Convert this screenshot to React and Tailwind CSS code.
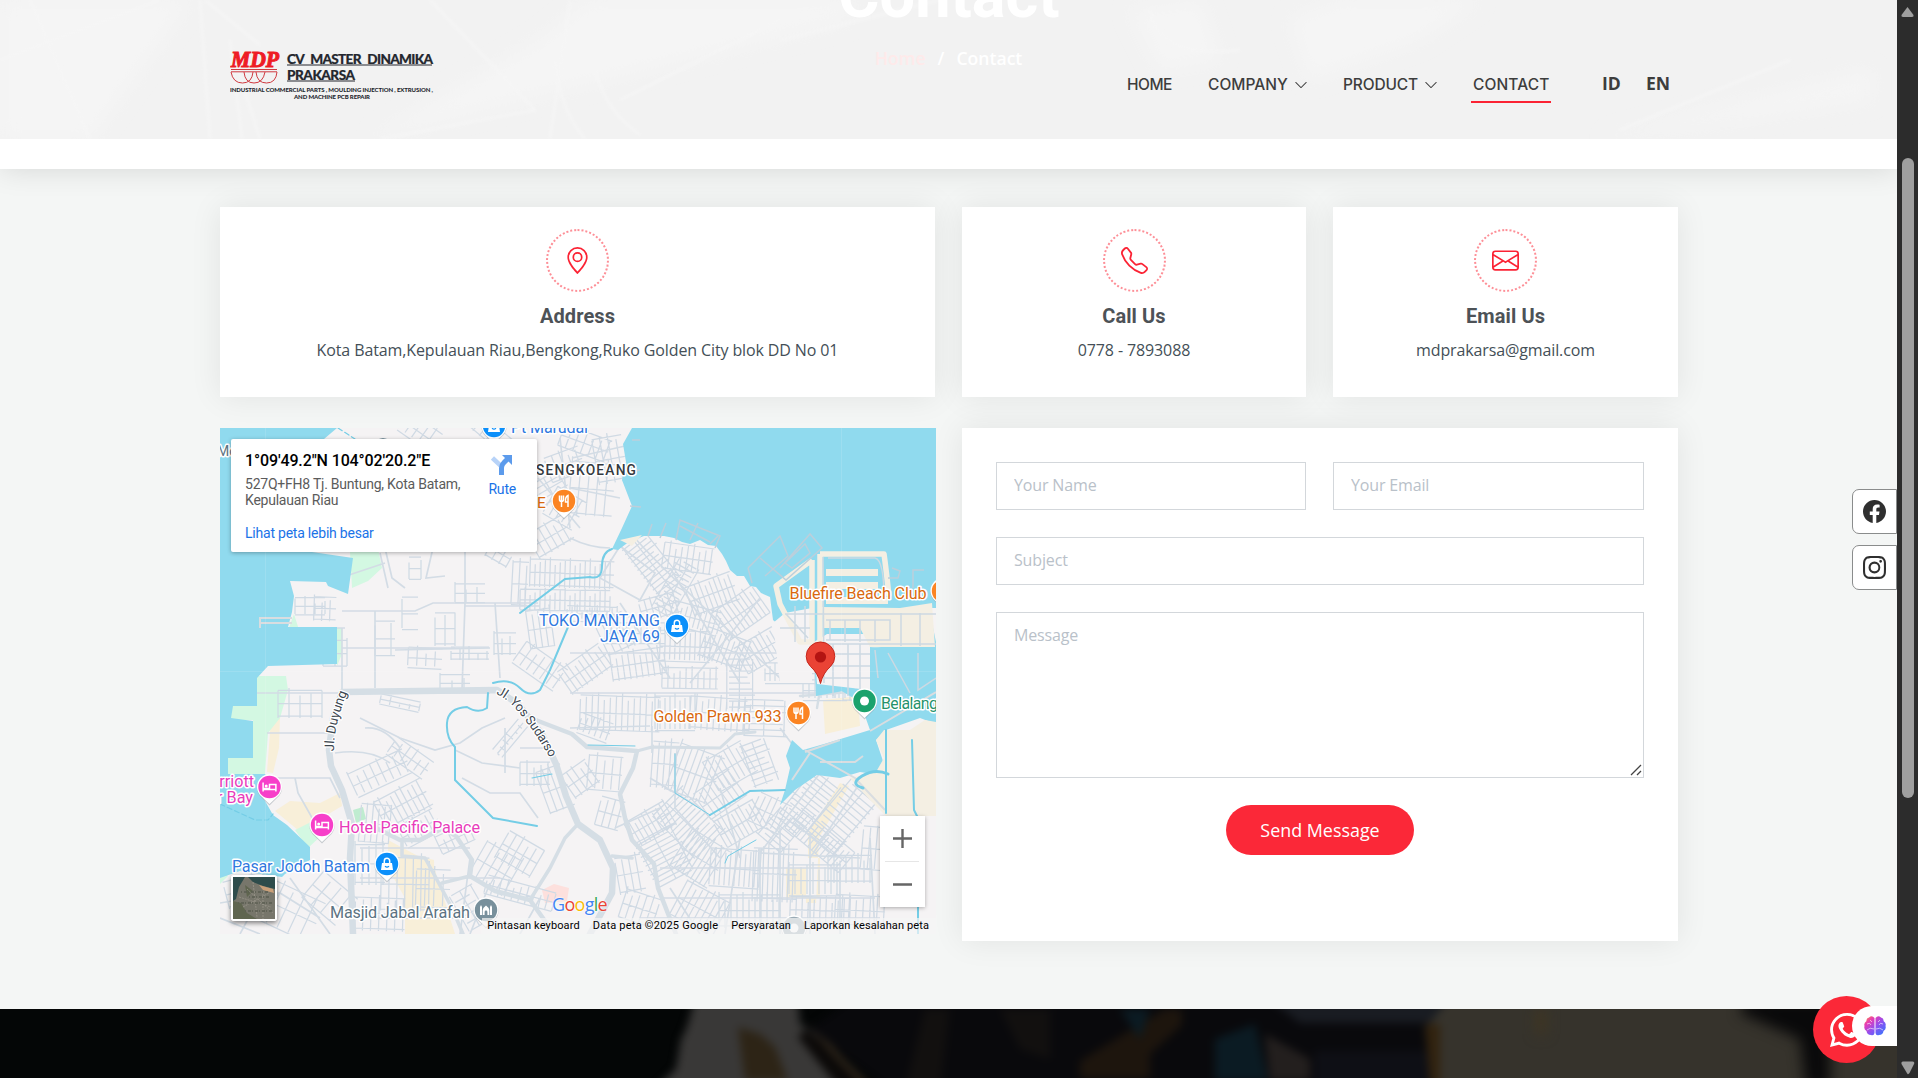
import React from "react";
import {
  BsGeoAlt,
  BsTelephone,
  BsEnvelope,
  BsFacebook,
  BsInstagram,
  BsWhatsapp,
  BsChevronDown,
} from "react-icons/bs";

const rot = (cx, cy, a, x, y) => {
  const r = (a * Math.PI) / 180;
  return [
    (cx + x * Math.cos(r) - y * Math.sin(r)).toFixed(1),
    (cy + x * Math.sin(r) + y * Math.cos(r)).toFixed(1),
  ].join(" ");
};

// Street blocks: [centre x, centre y, width, height, angle, spacing]
const BLOCKS = [
  [352, 145, 84, 30, 2, 5], [345, 172, 90, 24, 1, 5], [372, 186, 50, 18, 2, 5],
  [330, 108, 40, 30, -30, 7], [372, 60, 44, 60, 5, 9], [345, 80, 34, 36, 30, 7],
  [390, 30, 30, 50, -10, 8], [365, 15, 50, 26, 20, 8], [200, 4, 40, 26, 35, 8],
  [270, 4, 60, 20, 40, 8], [345, 36, 36, 30, -20, 8], [330, 60, 24, 34, 60, 6],
  [432, 135, 66, 32, 52, 5], [468, 130, 50, 30, 8, 6], [455, 160, 56, 26, -60, 5],
  [492, 165, 48, 34, -20, 5], [520, 185, 50, 38, -35, 5], [475, 190, 50, 28, 15, 5],
  [440, 178, 40, 24, -15, 6], [415, 205, 60, 24, 0, 6], [465, 218, 50, 36, 2, 5],
  [505, 220, 46, 34, 20, 5], [540, 222, 44, 34, -30, 5], [570, 245, 50, 24, 0, 5],
  [418, 235, 54, 30, -8, 6], [470, 250, 56, 24, 1, 6], [520, 256, 50, 30, 90, 6],
  [395, 205, 30, 40, -25, 7], [320, 200, 24, 44, -8, 6], [320, 238, 50, 30, 35, 8],
  [365, 240, 50, 30, -35, 6], [400, 285, 80, 40, 2, 6], [455, 285, 40, 40, 0, 5],
  [500, 285, 60, 36, 4, 6], [545, 290, 36, 46, 92, 6], [375, 300, 32, 24, 20, 6],
  [620, 222, 26, 70, 0, 8], [640, 250, 34, 50, 0, 7], [605, 262, 44, 24, 0, 6],
  [445, 335, 26, 50, 4, 6], [475, 345, 46, 56, 20, 6], [510, 338, 44, 40, -30, 6],
  [540, 335, 44, 28, 70, 6], [500, 366, 44, 36, -35, 6], [468, 395, 60, 46, 45, 5],
  [430, 395, 46, 30, -30, 5], [520, 395, 46, 34, -30, 5], [550, 385, 34, 36, 25, 6],
  [445, 428, 50, 44, 62, 5], [480, 430, 44, 50, 32, 5], [515, 440, 50, 44, 4, 5],
  [555, 445, 44, 58, 2, 5], [560, 402, 34, 34, -50, 5], [590, 372, 58, 38, -52, 5],
  [622, 388, 70, 40, -50, 6], [600, 412, 70, 30, 40, 5], [595, 452, 52, 36, 0, 6],
  [630, 440, 44, 30, 0, 6], [600, 482, 60, 30, 2, 6], [655, 420, 26, 50, 5, 7],
  [530, 482, 62, 36, 0, 6], [480, 480, 48, 44, 28, 6], [640, 482, 50, 34, 3, 7],
  [410, 445, 26, 40, -10, 7], [420, 480, 36, 34, 18, 7], [385, 345, 34, 40, 5, 8],
  [360, 350, 30, 30, -35, 7], [390, 385, 24, 34, 15, 7],
  [160, 345, 60, 30, -25, 8], [183, 375, 52, 34, -28, 6], [155, 395, 30, 44, 5, 6],
  [200, 400, 40, 28, -28, 6], [150, 435, 30, 44, 0, 7], [185, 455, 48, 60, 1, 8],
  [213, 460, 34, 44, 2, 9], [160, 485, 50, 36, 2, 8], [235, 410, 36, 22, -25, 7],
  [275, 440, 40, 46, 30, 8], [300, 425, 40, 34, 30, 8], [300, 465, 70, 22, 15, 7],
  [250, 480, 40, 28, 60, 8], [315, 345, 30, 26, 0, 7], [335, 360, 26, 50, -20, 7],
  [190, 330, 44, 24, 35, 8], [105, 180, 22, 26, 2, 8], [90, 178, 30, 20, 0, 10],
  [190, 185, 16, 38, 0, 18], [225, 200, 20, 36, 0, 10], [250, 165, 30, 22, 0, 11],
  [205, 230, 34, 24, 3, 9], [250, 225, 38, 14, 0, 9], [165, 210, 20, 40, 0, 16],
  [235, 255, 30, 20, 0, 12], [80, 275, 44, 30, 0, 11], [115, 225, 24, 30, 0, 12],
  [290, 310, 40, 14, -50, 7], [285, 215, 22, 24, 0, 8], [180, 275, 40, 12, 12, 10],
  [65, 480, 70, 50, 25, 12], [30, 460, 50, 30, -15, 10], [110, 470, 44, 40, 40, 12],
  [300, 155, 16, 50, 3, 7], [280, 125, 24, 20, 30, 8], [195, 140, 12, 26, 0, 12],
];

const BLOCK_PATH = BLOCKS.map(([cx, cy, w, h, a, s], n) => {
  let d = "";
  let i = 0;
  for (let x = -w / 2; x <= w / 2; x += s) {
    const cut = ((i * 7 + n * 5) % 4) * 2.5;
    d += `M${rot(cx, cy, a, x, -h / 2 + cut)}L${rot(cx, cy, a, x, h / 2 - ((i * 3 + n) % 3) * 2)}`;
    i++;
  }
  [-0.42, 0.02, 0.44].forEach((f) => {
    d += `M${rot(cx, cy, a, -w / 2, h * f)}L${rot(cx, cy, a, w / 2, h * f)}`;
  });
  return d;
}).join("");

const Pin = ({ x, y, color, kind }) => (
  <g transform={`translate(${x} ${y})`}>
    <path d="M0 17.5L-8 9.5A12.6 12.6 0 1 1 8 9.5Z" fill="#8b96a0" opacity=".45" transform="translate(0 1)" />
    <path d="M0 17L-8 9.5A12.6 12.6 0 1 1 8 9.5Z" fill="#fff" />
    <circle r="11.2" fill={color} />
    {kind === "food" && (
      <path d="M-4.5-5.5v4q0 2 2 2v5.5M-2.5-5.5V0M-.5-5.5v4q0 2-2 2M4 6V-5.5Q1-4 1.5 1H4" fill="none" stroke="#fff" strokeWidth="1.5" />
    )}
    {kind === "bag" && (
      <g>
        <path d="M-5-1H5L6 6H-6Z" fill="#fff" />
        <path d="M-2.7 0V-3a2.7 2.7 0 0 1 5.4 0V0" fill="none" stroke="#fff" strokeWidth="1.5" />
        <path d="M-2 2.2q2 2 4 0" fill="none" stroke={color} strokeWidth="1.2" />
      </g>
    )}
    {kind === "bed" && (
      <g>
        <path d="M-6.4-4.5V4.5M-6.4 2.5H6.4V4.5M6.4 2V-2.5H0V1.5H-6" fill="none" stroke="#fff" strokeWidth="1.5" />
        <circle cx="-3.3" cy="-1" r="1.5" fill="#fff" />
      </g>
    )}
    {kind === "dot" && <circle r="4.5" fill="#fff" />}
    {kind === "mosque" && (
      <path d="M-6 5V-3l1-2 1 2V5ZM4 5V-3l1-2 1 2V5ZM-3.3 5V0q0-2 3.3-4.5Q3.3-2 3.3 0V5H1.4V2a1.4 1.4 0 0 0-2.8 0V5Z" fill="#fff" />
    )}
  </g>
);

const Label = ({ x, y, color, children, size = 16.2, len, anchor = "start", ...rest }) => (
  <text
    x={x}
    y={y}
    fill={color}
    fontSize={size}
    textLength={len}
    textAnchor={anchor}
    stroke="#fff"
    strokeWidth="3"
    strokeLinejoin="round"
    paintOrder="stroke"
    {...rest}
  >
    {children}
  </text>
);

function MapArt() {
  return (
    <svg viewBox="0 0 716 506" className="block h-[506px] w-[716px] font-['Roboto',sans-serif]">
      <rect width="716" height="506" fill="#f5f3f4" />
      <g fill="#f8efd9">
        <path d="M55 383L70 373 100 375 120 365 122 378 90 397 78 402Z" />
        <path d="M168 412L198 428 214 432 216 506H185V470L168 440Z" />
        <path d="M198 432L215 442 235 506H190Z" />
        <path d="M603 272L638 268 640 298 605 306ZM620 355L629 358 599 410 596 475H586V440H566V470H600V430H588V405Z" />
        <path d="M51 291L60 289 59 320 53 345 47 344Z" />
      </g>
      <g fill="#d3f8e2">
        <path d="M92 121H158L162 140 148 153 132 160 130 124Z" />
        <path d="M37 248H66L68 262 60 290 48 305 45 346H5V325H33V292H8V276H37Z" />
        <path d="M67 205L74 186 80 205ZM117 200H122V226L117 238ZM75 402L95 392 103 406 88 420ZM0 440L8 448 0 456Z" />
      </g>
      <path d="M133 382L143 379 146 391 136 395Z" fill="#bfecd0" />
      <path d="M322 462l12-6 15 4-2 13-22 2z" fill="#fde0dd" />

      {/* Streets */}
      <path d={BLOCK_PATH} fill="none" stroke="#d0dae4" strokeWidth="1.25" />
      <g fill="none" stroke="#d3dce5" strokeWidth="1.7">
        <path d="M122 200V262M122 183H195L213 175H318M155 183V260M120 150L165 135M165 120L172 150 185 160M245 120V175L242 262M245 178H320M275 175L280 250M37 265H270M47 305H110M122 220H235M0 200H125M175 222L270 220M160 125L168 160M213 120L206 150 225 148" />
        <path d="M115 325Q150 320 170 335M140 290L180 310 215 322 240 315 262 300 285 290M235 322L262 335 300 340M285 300L285 345M145 300Q165 298 180 320M242 350L270 365 300 365 318 390M300 320H325M55 350H110L120 370M75 350L78 365 95 395" />
        <path d="M400 118L380 150 420 172 435 145 400 118M350 110Q370 120 390 120M350 60L400 70M352 30L405 18M340 10L350 100M318 50L360 100M415 110Q440 140 560 250M400 175L450 250M450 140L520 255M540 170L470 255M350 225L600 225M350 265H600M350 300L430 298M432 298V325M560 300L575 320M615 230V270M600 345L540 425 640 430M640 355L590 430M575 395L610 425" />
        <path d="M540 420V506M560 400V506M520 410L505 506M590 405V506M620 440V506M650 410L655 506M500 360L520 430M430 350L480 380M455 325V380L500 430M440 440H640M440 470H655M420 490H660M450 460L480 506M395 400L440 380" />
        <path d="M0 475L60 465 100 490M20 506L50 450M70 450L110 506M140 420H250M140 450H280M150 490H250M250 430L240 506M270 455L250 506M0 490L40 506M300 506L320 470" />
      </g>

      {/* Main roads */}
      <g fill="none" stroke="#d5dee5" strokeLinecap="round" strokeLinejoin="round">
        <path d="M122 264L277 262 298 276 322 306 336 336 346 368 358 396 380 412 393 440 392 465 370 506" strokeWidth="6.5" />
        <path d="M122 264L113 290 109 322 111 338 122 362 132 396 130 430 133 506" strokeWidth="6.5" />
        <path d="M313 291L352 306 367 319 417 323 413 340 400 366 405 390 412 412 434 436 438 460 456 506" strokeWidth="4.5" />
        <path d="M417 323L432 319 500 320 515 306 535 304" strokeWidth="3" />
        <path d="M150 397L180 412 200 412 222 400 236 408 252 432 250 448 275 463 310 472 330 500" strokeWidth="4.5" />
        <path d="M182 414V428L205 430 216 450 232 480 243 506M222 455L250 448M358 396L345 410 330 440 310 472M392 428L412 430" strokeWidth="3.6" />
        <path d="M597 132L601 256 597 280 M640 240L655 262 580 268" strokeWidth="2.4" />
      </g>

      {/* Water */}
      <g fill="#90daee">
        <path d="M0 0H117L104 11V124H92L133 130 128 166 108 158 106 154 70 153 74 168 72 184 68 199H117V236L48 238 37 250V278H13L11 290 33 293V330H8V346H45L52 356 40 364 53 387 67 397 90 419V432L65 446 62 449 20 443 0 450Z" />
        <path d="M412 0H716V180H709L716 214 650 220V258L596 268 594 220 580 216 553 192 550 169 541 165 536 159 530 158 524 148 517 148 510 142 506 133 502 126 496 118 488 117 480 112 470 116 462 114 454 110 444 108 424 108 410 113 398 122 392 121 402 100 412 78 402 52 406 34 403 16Z" />
        <path d="M620 262L650 259V220L716 214V296L700 290 666 302 656 312 662 330 667 348 640 344 620 350 597 347 575 362 560 377 565 362 570 340 566 328 572 312 583 322 604 316 650 302 640 274Z" />
      </g>
      <path d="M597 256L594 214 607 206H650V262Z" fill="#f5f3f4" />
      <path d="M565 185L592 180V255H560L553 195Z" fill="#f5f3f4" />
      <g fill="#f4efe3">
        <path d="M602 179L680 180 712 175 715 219H650L640 200H604Z" />
        <path d="M664 302L690 302 705 292 716 294V388H666L650 372 630 350 656 344 664 330 656 312Z" />
        <path d="M606 141H658V148H606ZM606 154H658V161H606ZM606 169H668V176H606Z" />
        <path d="M400 112L422 107 412 118Z" />
      </g>
      <g fill="none" stroke="#f4efe3" strokeWidth="5.5" strokeLinejoin="round">
        <path d="M600 126H664Q666 140 669 168M600 126V215" />
        <path d="M592 132L556 158 560 176 580 214H592V132" />
      </g>
      <path d="M561 162L588 143V180L566 178Z" fill="#90daee" />
      <path d="M603 129L604 255M608 130H655Q664 132 664 170M565 186H716M610 192V212M625 192V214M640 192V214M655 192V214M681 185V218M700 185V218M566 186L588 210M575 178V214M585 178V214M560 200H590M605 216H716M606 192H670V212H606M655 222L658 250M668 225L690 265M698 225V262L716 250M613 216V268M628 216V268M640 216V268M600 226H650M600 238H650M600 250H650" fill="none" stroke="#cdd9e2" strokeWidth="1.5" />
      <path d="M528 140L560 108 568 128 545 148M528 140L532 155M540 130L566 152 602 120 590 106 560 140M565 135L585 116 590 125 572 140ZM428 108L432 96M440 110L446 95M456 112L460 92 500 108 495 120M460 98L490 114M470 112L478 95M490 116L498 108M412 12L420 12M404 45L420 42M410 78L421 79M672 140L680 143 678 150 668 150M693 160V142H704" fill="none" stroke="#bccfdb" strokeWidth="1.5" />
      <path d="M650 303L716 264M585 324L620 312M572 352L590 325M585 322L635 350 665 382M600 334H635L643 328M40 200V190H72M40 195H72" fill="none" stroke="#d9dde0" strokeWidth="2" />
      <g fill="none" stroke="#74cde6" strokeWidth="2" strokeLinecap="round">
        <path d="M273 255Q290 250 300 260T320 262L330 242 348 199" />
        <path d="M268 265L267 280Q258 286 247 279 228 280 227 295T235 319V352L250 367 273 390 317 398" />
        <path d="M392 121Q382 124 382 138T370 149L345 151 300 185M490 387L530 363 565 362M666 302V385M692 312L694 382 698 390V506" />
        <path d="M312 350L332 346" strokeWidth="1.200" />
        <path d="M668 346Q655 340 642 348T643 360" strokeWidth="3" />
        <path d="M368 317L415 318M455 326L455 365 490 387M505 435L508 428 536 412" strokeWidth="1" />
        <path d="M0 376L35 392 48 392 53 386M118 0L135 11" strokeWidth="1.2" strokeDasharray="5 3" />
      </g>
      <path d="M45.500 0V506M261.500 478V506M621.500 0V335M0 243.500H716" stroke="#fff" strokeOpacity=".12" />

      {/* Places */}
      <Pin x={274} y={-2} color="#0b8ffa" kind="bag" />
      <Label x={291} y={5} color="#3079e0" len="77">Pt Marudai</Label>
      <Label x={-3} y={28} color="#5c7382" size="14">Mo</Label>
      <circle cx="163" cy="19" r="9" fill="#78909c" />
      <Label x={316} y={47} color="#353a40" size="13.8" len="100" fontWeight="500">SENGKOEANG</Label>
      <Label x={317} y={80} color="#d9690f" size="15.500">E</Label>
      <Pin x={344} y={73} color="#fb8422" kind="food" />
      <Pin x={457} y={198} color="#0b8ffa" kind="bag" />
      <Label x={440} y={198} color="#3079e0" len="121" anchor="end" size="16">TOKO MANTANG</Label>
      <Label x={440} y={213.500} color="#3079e0" len="60" anchor="end" size="16">JAYA 69</Label>
      <Pin x={723} y={163} color="#fb8422" kind="food" />
      <Label x={569.500} y={171} color="#d9690f" len="137">Bluefire Beach Club</Label>
      <Pin x={578.500} y={285} color="#fb8422" kind="food" />
      <Label x={433.500} y={293.500} color="#d9690f" len="128">Golden Prawn 933</Label>
      <Pin x={644.500} y={273} color="#1ba26c" kind="dot" />
      <Label x={661} y={281} color="#24926b" len="57">Belalang</Label>
      <Pin x={49.500} y={359} color="#f73fc9" kind="bed" />
      <Label x={34} y={359} color="#e83cbb" anchor="end">rriott</Label>
      <Label x={33} y={374.500} color="#e83cbb" anchor="end">r Bay</Label>
      <Pin x={102} y={397} color="#f73fc9" kind="bed" />
      <Label x={119} y={405} color="#e83cbb" len="141">Hotel Pacific Palace</Label>
      <Pin x={167} y={436} color="#0b8ffa" kind="bag" />
      <Label x={12} y={444} color="#3079e0" len="138">Pasar Jodoh Batam</Label>
      <Pin x={266} y={482} color="#78909c" kind="mosque" />
      <Label x={110} y={490} color="#5c7382" len="140">Masjid Jabal Arafah</Label>
      <Pin x={574} y={500} color="#9aaab5" kind="dot" />

      <path id="duyung" d="M114 323Q113 300 128 262L129 256" fill="none" />
      <path id="yos" d="M276 266C292 272 310 296 330 330L333 336" fill="none" />
      <text fontSize="13.200" fill="#3c4650" stroke="#fff" strokeWidth="2.500" paintOrder="stroke" letterSpacing="-.1">
        <textPath href="#duyung">Jl. Duyung</textPath>
      </text>
      <text fontSize="12.800" fill="#3c4650" stroke="#fff" strokeWidth="2.500" paintOrder="stroke" letterSpacing="-.25">
        <textPath href="#yos">Jl. Yos Sudarso</textPath>
      </text>

      {/* Location marker */}
      <path d="M600.500 255.500Q598 245 590.500 238.500A14.300 14.300 0 1 1 610.500 238.500Q603 245 600.500 255.500Z" fill="#ea4335" stroke="#c5281c" strokeWidth="1" />
      <circle cx="600.500" cy="229" r="5.600" fill="#b31412" />
    </svg>
  );
}

function Logo() {
  return (
    <svg viewBox="0 0 208 52" className="h-[52px] w-[208px]">
      <g transform="translate(1 16.500) scale(1 1.140)">
        <text fontFamily="Liberation Serif, serif" fontStyle="italic" fontWeight="700" fontSize="21" fill="#ee1c25" stroke="#ee1c25" strokeWidth="1" textLength="48" lengthAdjust="spacingAndGlyphs">
          MDP
        </text>
      </g>
      <path d="M1 19.500H47M1 21.800H47M1 22Q3 33 12.500 33T23 22M14 22Q15 33 24 33T35 22M26 22Q27 33 36.500 33T47 22" fill="none" stroke="#cf3a40" strokeWidth="1" />
      <g fontFamily="Lato, sans-serif" fontWeight="900" fill="#24272e">
        <text x="57" y="13.500" fontSize="13.600" textLength="146" wordSpacing="4" stroke="#24272e" strokeWidth=".2">CV MASTER DINAMIKA</text>
        <text x="57" y="29.500" fontSize="13.600" textLength="68" stroke="#24272e" strokeWidth=".2">PRAKARSA</text>
        <text x="0" y="42" fontSize="6" textLength="203">INDUSTRIAL COMMERCIAL PARTS , MOULDING INJECTION , EXTRUSION ,</text>
        <text x="64" y="49" fontSize="6" textLength="76">AND MACHINE PCB REPAIR</text>
      </g>
      <path d="M57 15H202M57 31H125" stroke="#24272e" strokeWidth="1.200" />
    </svg>
  );
}

function NavItem({ label, menu, active, className }) {
  return (
    <a className={`flex h-[36px] items-center ${className}`}>
      <span className={active ? "flex h-full items-center border-b-2 border-[#fb2334] px-[2px] pt-[2px]" : "flex h-full items-center"}>
        {label}
      </span>
      {menu && <BsChevronDown className="ml-[6px] size-[14px]" />}
    </a>
  );
}

function Header() {
  return (
    <header className="relative z-10 h-[169px] bg-white shadow-[0_0_28px_rgba(0,0,0,0.13)]">
      <div className="relative h-[139px] overflow-hidden bg-[#f2f2f2]">
        <svg viewBox="0 0 1897 139" className="absolute inset-0 h-full w-full" fill="none" stroke="#f6f6f6">
          <defs>
            <filter id="soft"><feGaussianBlur stdDeviation="1.500" /></filter>
            <filter id="haze"><feGaussianBlur stdDeviation="9" /></filter>
          </defs>
          <g filter="url(#haze)" stroke="none" fill="#f5f5f5">
            <path d="M0 0H190L90 139H0ZM370 139L560 90 850 20V0H590L540 40Z" />
            <path d="M1130 10L1200 0 1220 60 1160 70ZM1290 20L1340 0 1480 0 1420 40 1310 80ZM1600 139L1870 70V100Z" />
          </g>
          <g filter="url(#soft)" strokeWidth="2">
            <path d="M200 0L210 139M230 40L242 139M430 0L535 110 380 139M205 0L260 45M555 60Q560 110 585 139M595 70Q605 110 640 135M620 100L780 20M780 40L940 0M570 0L550 139M260 139L235 60M1150 10Q1160 60 1240 50M1620 130L1790 60M30 0L90 139M0 60L160 0" />
          </g>
        </svg>
        <div className="relative flex flex-col items-center">
          <h1 className="-mt-[37px] h-[65px] pl-[1px] text-[63px] font-bold leading-[65px] text-white font-['Roboto',sans-serif]">Contact</h1>
          <div className="mt-[17px] flex gap-[12px] text-[17.600px] font-semibold leading-[27px] text-white font-['Open_Sans',sans-serif]">
            <span className="text-[#feeaea]">Home</span>
            <span>/</span>
            <span>Contact</span>
          </div>
        </div>
      </div>
      <div className="absolute inset-x-0 top-0 flex h-[169px] items-center pl-[230px]">
        <div className="-mt-[18px]"><Logo /></div>
        <nav className="ml-[689px] mt-px flex items-center whitespace-nowrap text-[15.500px] font-medium text-[#3d3d3d] font-['Inter',sans-serif]">
          <NavItem label="HOME" className="w-[81px] tracking-[-0.500px]" />
          <NavItem label="COMPANY" menu className="w-[135px] tracking-[0.020px]" />
          <NavItem label="PRODUCT" menu className="w-[128px] tracking-[-0.150px]" />
          <NavItem label="CONTACT" active className="w-[131px] tracking-[0.100px]" />
          <span className="-mt-[3px] w-[44px] text-[17.600px] font-bold font-['Open_Sans',sans-serif]">ID</span>
          <span className="-mt-[3px] text-[17.600px] font-bold font-['Open_Sans',sans-serif]">EN</span>
        </nav>
      </div>
    </header>
  );
}

const CARD = "bg-white shadow-[0_0_30px_rgba(0,0,0,0.08)]";

function InfoCard({ icon: Icon, title, text }) {
  return (
    <div className={`flex h-[190px] flex-col items-center pt-[22px] ${CARD}`}>
      <div className="flex size-[63px] items-center justify-center rounded-full border-2 border-dotted border-[#fd8f97] text-[#fb2334]">
        <Icon className="size-[27px]" />
      </div>
      <h3 className="mt-[12px] text-[20px] font-bold leading-[24px] tracking-[0.100px] text-[#4d5257] font-['Roboto',sans-serif]">{title}</h3>
      <p className="mt-[10px] text-[16px] leading-[24px] tracking-[-0.120px] text-[#444f57] font-['Open_Sans',sans-serif]">{text}</p>
    </div>
  );
}

function MapPanel() {
  return (
    <div className="relative h-[506px] w-[716px] overflow-hidden font-['Roboto',sans-serif]">
      <MapArt />
      <div className="absolute left-[11px] top-[11px] flex h-[113px] w-[306px] justify-between rounded-[2px] bg-white pl-[14px] pr-[21px] pt-[14px] shadow-[0_1px_4px_rgba(0,0,0,0.3)]">
        <div className="whitespace-nowrap text-[14px] leading-[16px]">
          <div className="text-[16px] font-medium leading-[16px] tracking-[-0.130px] text-black">1°09'49.2"N 104°02'20.2"E</div>
          <div className="mt-[7px] tracking-[-0.230px] text-[#5b5b5b]">527Q+FH8 Tj. Buntung, Kota Batam,<br />Kepulauan Riau</div>
          <div className="mt-[17px] tracking-[-0.220px] text-[#1a73e8]">Lihat peta lebih besar</div>
        </div>
        <div className="flex flex-col items-center pt-px text-[14px] leading-[16px] tracking-[-0.200px] text-[#1a73e8]">
          <svg viewBox="0 0 22 22" className="size-[22px]">
            <path d="M1.500 4L10 12" stroke="#b8d3f8" strokeWidth="4.500" />
            <path d="M10.500 21V14Q10.500 11 13 8.500L17 4.500" fill="none" stroke="#5c9bec" strokeWidth="5" />
            <path d="M11 1H21V11Z" fill="#5c9bec" />
          </svg>
          <span className="mt-[5px]">Rute</span>
        </div>
      </div>
      <div className="absolute left-[11px] top-[447px] size-[46px] rounded-[3px] border-2 border-white shadow-[0_2px_5px_rgba(0,0,0,0.5)]">
        <svg viewBox="0 0 42 42" className="block size-full">
          <rect width="42" height="42" fill="#77766b" />
          <path d="M0 0H12L6 10 3 22 0 24ZM15 0H42V12L30 9 20 5Z" fill="#2e4c4b" />
          <path d="M26 8L40 12 41 16 30 13Z" fill="#caa079" />
          <path d="M0 24L8 26 14 36 24 42H0ZM12 8L20 14 14 20Z" fill="#555e43" opacity=".7" />
          <path d="M6 20L38 30M20 5L24 40M10 30L36 16M30 14V42M14 12L40 36" stroke="#9b978c" strokeWidth=".8" strokeDasharray="2 1" />
          <path d="M8 15h28M5 26h34M12 34h27M16 20h20" stroke="#5b5d52" strokeWidth="1.400" strokeDasharray="1 2 3 1" />
        </svg>
      </div>
      <div className="absolute left-[660px] top-[388px] h-[91px] w-[45px] bg-white shadow-[0_1px_4px_rgba(0,0,0,0.3)]">
        <svg viewBox="0 0 45 91" className="h-[91px] w-[45px]" fill="none">
          <path d="M13 22.500H32M22.500 13V32M13 68.500H32" stroke="#666" strokeWidth="2.400" />
          <path d="M5 45.500H39" stroke="#e6e6e6" />
        </svg>
      </div>
      <div className="absolute left-[332px] top-[464px] text-[18px] font-medium leading-[24px] tracking-[-0.700px] text-[#4285f4] [text-shadow:0_0_2px_#fff,0_0_2px_#fff] font-['Open_Sans',sans-serif]">
        G<span className="text-[#ea4335]">o</span><span className="text-[#fbbc05]">o</span>g<span className="text-[#34a853]">l</span><span className="text-[#ea4335]">e</span>
      </div>
      <div className="absolute bottom-0 right-0 flex h-[16px] items-center gap-[13px] whitespace-nowrap bg-[#f5f5f5]/70 pl-[5px] pr-[7px] pt-px text-[11px] text-black">
        <span className="tracking-[0.120px]">Pintasan keyboard</span>
        <span className="tracking-[0.220px]">Data peta ©2025 Google</span>
        <span className="tracking-[0.120px]">Persyaratan</span>
        <span className="tracking-[0.110px]">Laporkan kesalahan peta</span>
      </div>
    </div>
  );
}

const FIELD = "h-[48px] border border-[#d3d7db] bg-white px-[17px] pb-[2px] text-[16px] tracking-[-0.150px] text-[#444] outline-none placeholder:text-[#b9c1c9]";

function ContactForm() {
  return (
    <form className={`flex h-[513px] flex-col px-[34px] pt-[34px] font-['Open_Sans',sans-serif] ${CARD}`}>
      <div className="grid grid-cols-[310px_311px] gap-[27px]">
        <input className={`min-w-0 ${FIELD}`} placeholder="Your Name" />
        <input className={`min-w-0 ${FIELD}`} placeholder="Your Email" />
      </div>
      <input className={`mt-[27px] ${FIELD}`} placeholder="Subject" />
      <div className="relative mt-[27px] h-[166px]">
        <textarea className="block h-full w-full resize-none border border-[#d3d7db] px-[17px] py-[10px] text-[16px] leading-[24px] tracking-[-0.150px] outline-none placeholder:text-[#b9c1c9]" placeholder="Message" />
        <svg viewBox="0 0 12 12" className="absolute bottom-[2px] right-[2px] size-[12px]">
          <path d="M1 11L11 1M7 11L11 7" stroke="#444" strokeWidth="1.300" />
        </svg>
      </div>
      <button type="button" className="mt-[27px] h-[50px] w-[188px] self-center rounded-full bg-[#fb2838] text-[17.900px] text-white">Send Message</button>
    </form>
  );
}

function FooterArt() {
  return (
    <svg viewBox="0 0 1897 69" className="block h-[69px] w-full">
      <defs>
        <filter id="blurA" colorInterpolationFilters="sRGB" x="-5%" y="-20%" width="110%" height="140%"><feGaussianBlur stdDeviation="4" /></filter>
        <filter id="blurB" colorInterpolationFilters="sRGB" x="-5%" y="-20%" width="110%" height="140%"><feGaussianBlur stdDeviation="7" /></filter>
      </defs>
      <rect width="1897" height="69" fill="#040606" />
      <g filter="url(#blurA)">
        <path d="M694-9Q688 20 681 30L676 60 655 80H860L825 30 800 15 798-9Z" fill="#393837" />
        <path d="M738 18L760 25 775 38 788 72H745Z" fill="#2d2416" />
        <path d="M798 28L806 20 880 80H840Z" fill="#0b0908" />
        <path d="M812 18L840 50 865 75" stroke="#352b1e" strokeWidth="5" fill="none" />
        <path d="M850-9H1440V80H890L810 20Z" fill="#09090c" />
        <path d="M925 0H950L940 80H905ZM1000 0H1050V50L1020 40Z" fill="#12100f" />
        <path d="M1165 0H1182V16L1150 45V70H1080V52Z" fill="#1d150d" />
        <path d="M1120 0H1150L1140 30ZM1215 30L1255 15 1268 72H1215Z" fill="#0b1b23" />
        <path d="M1265 25L1310 50V72H1270Z" fill="#231f1e" />
        <path d="M1270-9H1450V14H1300Z" fill="#191c22" />
        <path d="M1315 42H1430V80H1315Z" fill="#0e0f15" />
        <path d="M1448-9H1910V80H1435L1425 20Z" fill="#36332c" />
        <path d="M1425 15H1440V75H1430Z" fill="#32230f" />
      </g>
      <g filter="url(#blurB)">
        <path d="M1745-10H1830V80H1806L1800 30 1740 4Z" fill="#09090a" />
        <path d="M1537 0h8v25h-8z" fill="#43371f" />
      </g>
    </svg>
  );
}

function SideWidgets() {
  return (
    <>
      <div className="absolute left-[1852px] top-[489px] z-20 flex flex-col gap-[11px] text-[#2f2f2f]">
        {[BsFacebook, BsInstagram].map((Icon, i) => (
          <div key={i} className="flex h-[45px] w-[45px] items-center justify-center rounded-l-[7px] border border-[#8a8c8c] bg-white">
            <Icon className="size-[23px]" />
          </div>
        ))}
      </div>
      <div className="absolute left-[1813px] top-[996px] z-20 flex size-[67px] items-center justify-center rounded-full bg-[#fb2838] text-white">
        <BsWhatsapp className="size-[34px]" />
      </div>
      <div className="absolute left-[1852px] top-[1006px] z-20 flex h-[40px] w-[45px] items-center rounded-l-full bg-white pl-[12px]">
        <svg viewBox="0 0 22 20" className="h-[20px] w-[22px]">
          <defs>
            <linearGradient id="brain" x1="0" y1="0" x2="1" y2="1">
              <stop offset="0" stopColor="#fb9a2c" />
              <stop offset=".25" stopColor="#e83bb4" />
              <stop offset=".55" stopColor="#9050f0" />
              <stop offset="1" stopColor="#2a7bff" />
            </linearGradient>
          </defs>
          <path d="M10.500 2Q8-1 5 1.500 2 2 2.500 5-.5 7 .5 10-.5 13 2.500 15 3 19 7 19 10 20 10.500 17ZM11.500 2Q14-1 17 1.500 20 2 19.500 5 22.500 7 21.500 10 22.500 13 19.500 15 19 19 15 19 12 20 11.500 17Z" fill="url(#brain)" />
          <path d="M3 8Q6 6 7 9M3 14Q6 11 10 13M6 4L8 6M19 8Q16 6 15 9M19 14Q16 11 12 13M16 4L14 6" stroke="#fff" strokeOpacity=".65" strokeWidth=".9" fill="none" />
        </svg>
      </div>
    </>
  );
}

function Scrollbar() {
  return (
    <div className="flex h-[1078px] w-[21px] flex-col items-center justify-between bg-[#2c2c2c]">
      <svg viewBox="0 0 21 158" className="h-[158px] w-[21px]">
        <path d="M10.500 7L16.500 15Q17 17 15 17H6Q4 17 4.500 15Z" fill="#9f9f9f" />
      </svg>
      <div className="h-[640px] w-[12px] rounded-full bg-[#9f9f9f]" />
      <svg viewBox="0 0 21 280" className="h-[280px] w-[21px]">
        <path d="M10.500 276L4.500 266Q4 263.500 6 263.500H15.500Q18 263.500 17 266L12.500 275Q11.500 276.500 10.500 276Z" fill="#9f9f9f" />
      </svg>
    </div>
  );
}

export default function App() {
  return (
    <div className="relative flex h-[1078px] w-[1918px] overflow-hidden bg-[#f4f6f5]">
      <div className="flex w-[1897px] flex-col overflow-hidden">
        <Header />
        <main className="ml-[220px] mt-[38px] h-[802px] w-[1458px]">
          <div className="grid grid-cols-[715px_344px_345px] gap-[27px]">
            <InfoCard icon={BsGeoAlt} title="Address" text="Kota Batam,Kepulauan Riau,Bengkong,Ruko Golden City blok DD No 01" />
            <InfoCard icon={BsTelephone} title="Call Us" text="0778 - 7893088" />
            <InfoCard icon={BsEnvelope} title="Email Us" text="mdprakarsa@gmail.com" />
          </div>
          <div className="mt-[31px] grid grid-cols-[716px_716px] gap-[26px]">
            <MapPanel />
            <ContactForm />
          </div>
        </main>
        <footer><FooterArt /></footer>
      </div>
      <Scrollbar />
      <SideWidgets />
    </div>
  );
}
